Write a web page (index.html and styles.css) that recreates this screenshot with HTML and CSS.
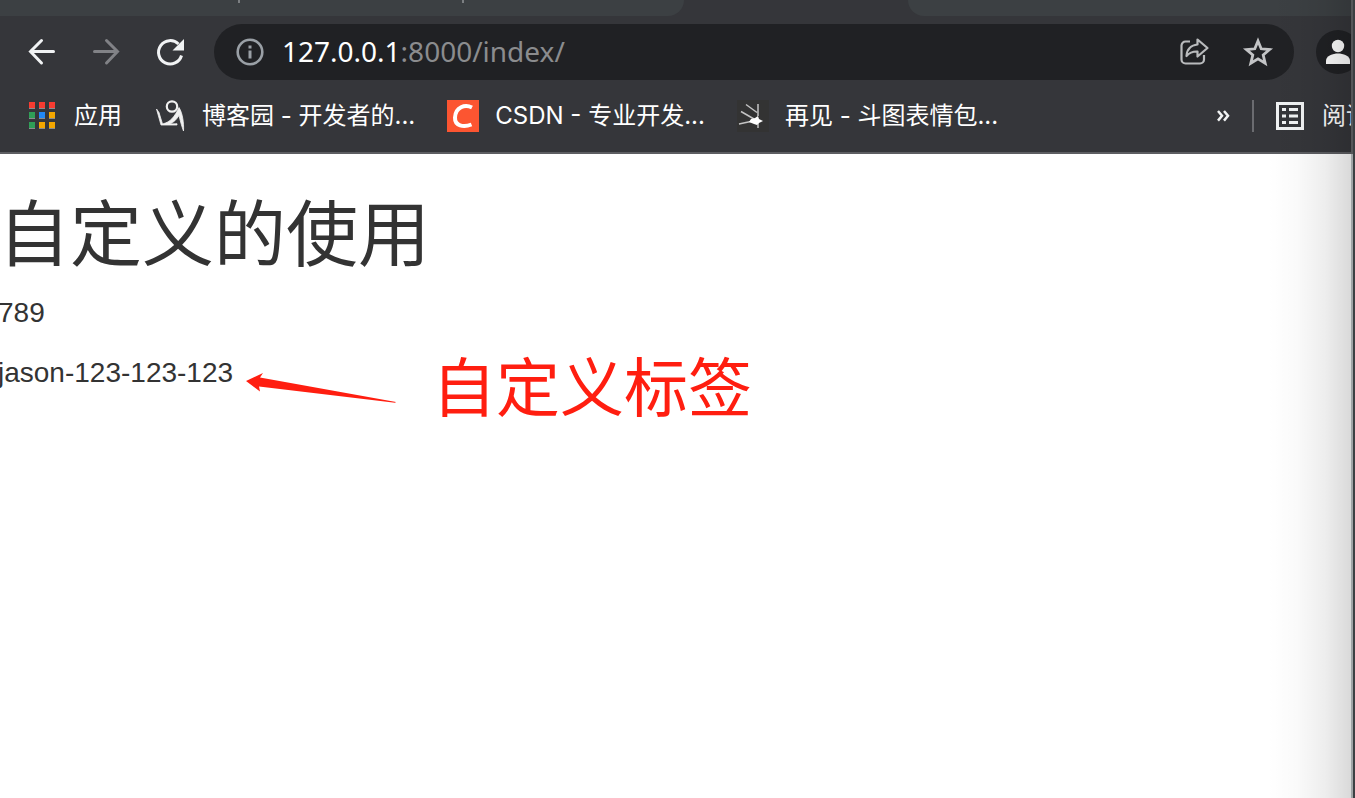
FILE: index.html
```
<!DOCTYPE html>
<html lang="zh-CN">

<head>
    <meta charset="UTF-8">
    <meta name="viewport" content="width=device-width, initial-scale=1.0">
    <title>自定义的使用</title>
    <link rel="stylesheet" href="styles.css">
</head>

<body>
    <div class="desktop">
        <div class="window">
            <div class="tabs">
                <div class="tab-group left">
                    <span class="tab-line"></span>
                    <span class="tab-line"></span>
                </div>
                <div class="tab-group right"></div>
            </div>

            <div class="toolbar">
                <button class="nav-btn" type="button" aria-label="后退">
                    <svg width="32" height="32" viewBox="0 0 32 32" fill="none" stroke="#f1f3f4" stroke-width="3" stroke-linecap="round">
                        <path d="M27.500 15.500H4.500M15.500 4.500L4.500 15.500l11 11.500" />
                    </svg>
                </button>
                <button class="nav-btn" type="button" aria-label="前进">
                    <svg width="32" height="32" viewBox="0 0 32 32" fill="none" stroke="#818286" stroke-width="3" stroke-linecap="round">
                        <path d="M4.500 15.500H27.500M16.500 4.500L27.500 15.500 16.500 27" />
                    </svg>
                </button>
                <button class="nav-btn" type="button" aria-label="重新加载">
                    <svg width="32" height="32" viewBox="0 0 32 32">
                        <path d="M27.500 19.500A11.700 11.700 0 1 1 24.500 8" fill="none" stroke="#f1f3f4" stroke-width="3" />
                        <path d="M30 3v11.500H18.500z" fill="#f1f3f4" />
                    </svg>
                </button>

                <form class="address">
                    <svg class="info" width="28" height="28" viewBox="0 0 28 28">
                        <circle cx="14" cy="14" r="12.300" fill="none" stroke="#9aa0a6" stroke-width="2.600" />
                        <path d="M12.500 7.500h3v3h-3zM12.500 12.500h3v8h-3z" fill="#9aa0a6" />
                    </svg>
                    <label class="host" for="url">127.0.0.1</label>
                    <input class="url" id="url" type="text" value=":8000/index/">
                    <button class="address-btn" type="button" aria-label="分享">
                        <svg width="32" height="32" viewBox="0 0 32 32" fill="none" stroke="#b9bbbd" stroke-width="2.200" stroke-linejoin="round">
                            <path d="M12 5.500H7.500A4 4 0 0 0 3.500 9.500v14a4 4 0 0 0 4 4h14.500a4 4 0 0 0 4-4v-4.500" />
                            <path d="M19.500 3.500l10 8.500-10 8.500v-5c-5-.200-8 1-11 4.500.300-6.500 4.500-11 11-11.500z" />
                        </svg>
                    </button>
                    <button class="address-btn" type="button" aria-label="添加书签">
                        <svg width="32" height="32" viewBox="0 0 32 32" fill="none" stroke="#c3c4c6" stroke-width="2.800">
                            <path d="M16 5l3.200 7.800 8.400.700-6.400 5.500 2 8.300L16 22.900l-7.200 4.400 2-8.300-6.400-5.500 8.400-.700z" />
                        </svg>
                    </button>
                </form>

                <button class="avatar" type="button" aria-label="用户">
                    <svg width="44" height="44" viewBox="0 0 44 44" fill="#fff">
                        <circle cx="22" cy="16" r="6.200" />
                        <path d="M10 34v-3.500c0-4.500 7-7 12-7s12 2.500 12 7V34z" />
                    </svg>
                </button>
            </div>

            <div class="bookmarks">
                <a class="bookmark" href="#">
                    <svg width="32" height="32" viewBox="0 0 32 32">
                        <path d="M3 7h6v2H3zM13 7h6v2h-6zM23 7h6v2h-6zM3 17h6v2H3zM13 17h6v2h-6zM23 17h6v2h-6zM3 27h6v2H3zM13 27h6v2h-6zM23 27h6v2h-6z" fill="#8b8c8f" />
                        <path d="M3 2h6v6H3zM13 2h6v6h-6zM23 2h6v6h-6z" fill="#f73c31" />
                        <path d="M3 12h6v6H3zM3 22h6v6H3z" fill="#2f9e57" />
                        <path d="M13 12h6v6h-6z" fill="#2188f5" />
                        <path d="M23 12h6v6h-6zM13 22h6v6h-6zM23 22h6v6h-6z" fill="#f3a600" />
                    </svg>
                    <span>应用</span>
                </a>
                <a class="bookmark" href="#">
                    <svg width="32" height="32" viewBox="0 0 32 32">
                        <circle cx="18" cy="6.500" r="5.200" fill="none" stroke="#f0f0f0" stroke-width="2.200" />
                        <path d="M2.500 9l2.500 3.500 3.500 11.500c8-2 12-7 16.500-16.500C28.500 13 30 23 29.500 31 28 27 26.500 22 25 15.500c-2.500 4-5.500 7-9 8.500l7-.300V25H7z" fill="#f0f0f0" stroke="#f0f0f0" stroke-width="0.800" />
                    </svg>
                    <span>博客园 - 开发者的...</span>
                </a>
                <a class="bookmark" href="#">
                    <svg width="32" height="32" viewBox="0 0 32 32">
                        <path d="M0 0h32v32H0z" fill="#fc5531" />
                        <path d="M25 7.500C18 4 8.500 7 8 17.500c-.300 8.500 8.500 10 16.500 7" fill="none" stroke="#fff" stroke-width="4" />
                    </svg>
                    <span>CSDN - 专业开发...</span>
                </a>
                <a class="bookmark" href="#">
                    <svg width="32" height="32" viewBox="0 0 32 32">
                        <path d="M0 0h32v32H0z" fill="#333" />
                        <path d="M9 4.500l11 8M21 4v12M4 11.500L17 19M2 24l14-3M21 22v6" fill="none" stroke="#c4c4c4" stroke-width="1.500" />
                        <path d="M14 19l4-1 3-2 1 3 4 2-4 2-2 2-3-1-5-2z" fill="#fff" />
                    </svg>
                    <span>再见 - 斗图表情包...</span>
                </a>

                <button class="more" type="button" aria-label="更多书签">
                    <svg width="14" height="14" viewBox="0 0 14 14" fill="none" stroke="#f1f3f4" stroke-width="2.500">
                        <path d="M2 2l4 4.800-4 4.800M8 2l4 4.800-4 4.800" />
                    </svg>
                </button>
                <span class="divider"></span>
                <a class="bookmark reading" href="#">
                    <svg width="28" height="28" viewBox="0 0 28 28">
                        <path d="M1.500 1.500h25v25h-25z" fill="none" stroke="#f1f3f4" stroke-width="3" />
                        <path d="M6 6h4v3H6zM13 6h9v3h-9zM6 12.500h4v3H6zM13 12.500h9v3h-9zM6 19h4v3H6zM13 19h9v3h-9z" fill="#f1f3f4" />
                    </svg>
                    <span>阅读</span>
                </a>
            </div>

            <main class="content">
                <h1>自定义的使用</h1>
                <p>789</p>
                <p>jason-123-123-123</p>

                <!-- note over the page -->
                <div class="note">
                    <svg width="152" height="56" viewBox="0 0 152 56">
                        <path d="M0 28L17 20l-3 4.500L150 49l-1 .800L13 33.500l1 5z" fill="#ff1e10" />
                    </svg>
                    <span>自定义标签</span>
                </div>
            </main>

            <div class="shade"></div>
        </div>
        <div class="edge"></div>
    </div>
</body>

</html>
```
FILE: styles.css
```
* {
    box-sizing: border-box;
}

body {
    margin: 0;
    font-family: "Noto Sans", "Noto Sans CJK SC", sans-serif;
    background: #fff;
}

svg {
    display: block;
    flex: none;
}

button {
    padding: 0;
    border: none;
    background: none;
    cursor: pointer;
}

.desktop {
    display: flex;
    min-height: 100vh;
}

.window {
    position: relative;
    flex: 1;
    min-width: 0;
    overflow: hidden;
}

/* Tab strip */

.tabs {
    display: flex;
    height: 16px;
    background: #35363a;
}

.tab-group {
    background: #3c4043;
}

.tab-group.left {
    display: flex;
    gap: 222px;
    flex: 0 0 684px;
    padding-left: 238px;
    border-bottom-right-radius: 16px;
}

.tab-group.right {
    flex: 1;
    margin-left: 224px;
    border-bottom-left-radius: 16px;
}

.tab-line {
    width: 2px;
    height: 3px;
    background: #7c7f82;
}

/* Toolbar */

.toolbar {
    display: flex;
    align-items: center;
    height: 72px;
    padding-left: 26px;
    background: #35363a;
}

.nav-btn {
    margin-right: 32px;
}

.address {
    display: flex;
    align-items: center;
    flex: 1;
    min-width: 0;
    height: 56px;
    margin-right: 22px;
    margin-left: -4px;
    padding: 0 20px 0 22px;
    border-radius: 28px;
    background: #202124;
    font-size: 28px;
    line-height: 38px;
}

.host,
.url {
    height: 40px;
}

.info {
    margin-right: 18px;
}

.host {
    color: #fff;
}

.url {
    flex: 1;
    min-width: 0;
    padding: 0 0 2px;
    border: none;
    outline: none;
    background: none;
    color: #8b8c8e;
    font: inherit;
}

.address-btn {
    margin-left: 32px;
}

.avatar {
    width: 44px;
    height: 44px;
    margin-right: -9px;
    border-radius: 50%;
    background: #202124;
}

/* Bookmarks */

.bookmarks {
    display: flex;
    align-items: center;
    gap: 32px;
    height: 66px;
    padding: 0 0 8px 26px;
    border-bottom: 2px solid #5d5e62;
    background: #35363a;
}

.bookmark {
    display: flex;
    align-items: center;
    gap: 16px;
    color: #fff;
    font-family: Inter, "Noto Sans CJK SC", sans-serif;
    font-size: 24px;
    line-height: 32px;
    white-space: nowrap;
    text-decoration: none;
}

.more {
    margin-left: auto;
    margin-right: -10px;
}

.divider {
    width: 2px;
    height: 32px;
    margin-right: -10px;
    background: #6b6c70;
}

.reading {
    gap: 18px;
    margin-right: -19px;
}

/* Page */

.content {
    position: relative;
    margin-left: -2px;
    color: #333;
    font-family: "Liberation Sans", "Noto Sans CJK SC", sans-serif;
    font-size: 28px;
    line-height: 40px;
}

.content h1 {
    margin: 42px 0 18px;
    font-size: 72px;
    font-weight: 400;
    line-height: 79px;
}

.content p {
    margin: 0 0 20px;
}

.note {
    position: absolute;
    top: 157px;
    left: 248px;
    display: flex;
    align-items: flex-start;
    gap: 34px;
    color: #ff1e10;
    font-size: 64px;
    line-height: 72px;
    white-space: nowrap;
}

/* Shadow of the window lying to the right */

.shade {
    position: absolute;
    top: 0;
    right: 0;
    bottom: 0;
    width: 84px;
    background: linear-gradient(to right, rgba(0, 0, 0, 0), rgba(0, 0, 0, 0.02) 35%, rgba(0, 0, 0, 0.07) 70%, rgba(0, 0, 0, 0.15));
    pointer-events: none;
}

.edge {
    flex: none;
    width: 4px;
    border-right: 2px solid #3c4043;
    background: linear-gradient(#55575a 154px, #a0a4a6 154px);
}
```
